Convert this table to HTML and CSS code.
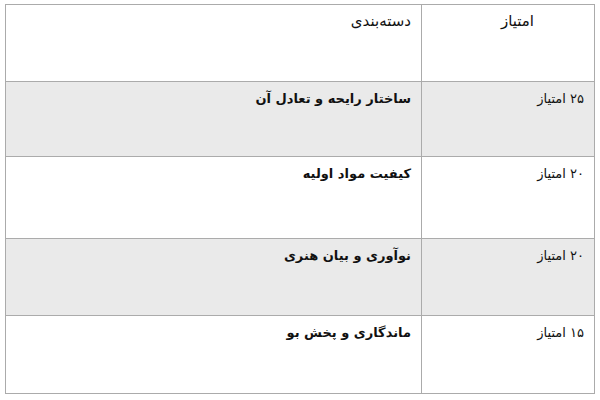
FILE: index.html
```html
<!DOCTYPE html>
<html lang="fa" dir="rtl">
<head>
<meta charset="utf-8">
<link rel="stylesheet" href="styles.css">
</head>
<body>
<table class="score-table">
  <tr class="row head">
    <td class="points"><span class="head-points">امتیاز</span></td>
    <td class="cat">دسته‌بندی</td>
  </tr>
  <tr class="row r1 shaded">
    <td class="points">۲۵ امتیاز</td>
    <td class="cat bold">ساختار رایحه و تعادل آن</td>
  </tr>
  <tr class="row r2">
    <td class="points">۲۰ امتیاز</td>
    <td class="cat bold">کیفیت مواد اولیه</td>
  </tr>
  <tr class="row r3 shaded">
    <td class="points">۲۰ امتیاز</td>
    <td class="cat bold">نوآوری و بیان هنری</td>
  </tr>
  <tr class="row r4">
    <td class="points">۱۵ امتیاز</td>
    <td class="cat bold">ماندگاری و پخش بو</td>
  </tr>
</table>
</body>
</html>
```
FILE: styles.css
```css
html, body {
  margin: 0;
  padding: 0;
  background: #ffffff;
}
body {
  padding: 4px 5px 0 5px;
  font-family: "DejaVu Sans", sans-serif;
  font-size: 13px;
  color: #111;
}
.score-table {
  width: 590px;
  border-collapse: collapse;
  direction: rtl;
}
.score-table td {
  border: 1px solid #ababab;
  vertical-align: top;
  padding: 9px 10px 0 10px;
  line-height: 16px;
  text-align: right;
}
.head { height: 77px; }
.head td { font-size: 15px; padding-top: 8px; }
.r1 { height: 75px; }
.r2 { height: 82px; }
.r3 { height: 77px; }
.r4 { height: 78px; }
.points { width: 152px; }
.head-points { padding-right: 50px; }
.shaded td { background: #eaeaea; }
.bold { font-weight: bold; }
```
